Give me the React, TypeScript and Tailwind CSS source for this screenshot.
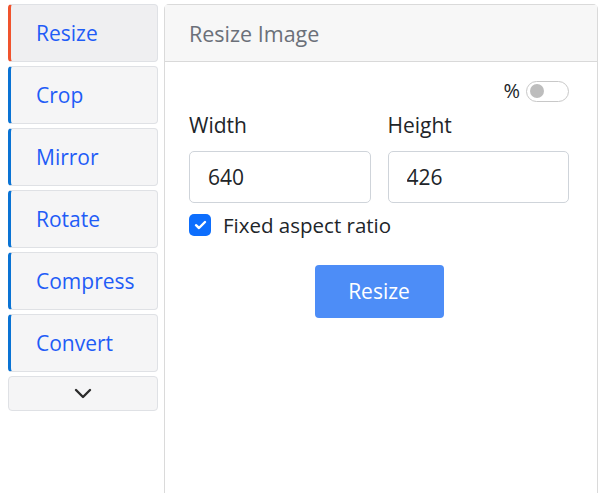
import { useState } from "react";

const TOOLS = ["Resize", "Crop", "Mirror", "Rotate", "Compress", "Convert"];

export default function App() {
  const [fixed, setFixed] = useState(true);
  const [pct, setPct] = useState(false);

  return (
    <div className="flex h-[493px] w-[600px] overflow-hidden bg-white font-['Open_Sans',sans-serif] text-[#212529]">
      {/* Sidebar */}
      <div className="flex w-[164px] shrink-0 flex-col gap-[4px] pl-[8px] pr-[6px] pt-[4px]">
        {TOOLS.map((t, i) => (
          <button
            key={t}
            className={`flex h-[58px] items-center rounded-[4px] border border-[#dfe1e5] border-l-[3px] pl-[25px] pt-[2px] text-left text-[21px] text-[#1f5cf7] ${
              i === 0 ? "border-l-[#f0532d] bg-[#efeff1]" : "border-l-[#0a73d4] bg-[#f5f5f6]"
            }`}
          >
            {t}
          </button>
        ))}
        <button className="flex h-[35px] items-center justify-center rounded-[4px] border border-[#dfe1e5] bg-[#f5f5f6]">
          <svg width="20" height="12" viewBox="0 0 20 12" fill="none" stroke="#2b2b2b" strokeWidth="2.4" strokeLinecap="round" strokeLinejoin="round">
            <path d="M3 2l7 7 7-7" />
          </svg>
        </button>
      </div>

      {/* Main panel */}
      <div className="mt-[4px] mr-[2px] flex flex-1 flex-col rounded-t-[5px] border border-b-0 border-[#dadada]">
        <div className="flex h-[57px] items-center border-b border-[#d9d9d9] bg-[#f7f7f7] pl-[24px] pt-[2px] text-[21.5px] text-[#6b7079]">
          Resize Image
        </div>
        <div className="flex flex-col pl-[24px] pr-[28px]">
          <div className="mt-[14px] flex items-center justify-end gap-[6px]">
            <span className="text-[20px]">%</span>
            <button
              onClick={() => setPct(!pct)}
              className="flex h-[21px] w-[43px] items-center rounded-full border border-[#c8c8c8] bg-white px-[3px]"
            >
              <span className="h-[14px] w-[14px] rounded-full bg-[#bdbdbd]" />
            </button>
          </div>
          <div className="mt-[4px] grid grid-cols-2 gap-[17px]">
            <label className="flex flex-col">
              <span className="text-[21px] leading-[30px]">Width</span>
              <input
                defaultValue="640"
                className="mt-[11px] h-[52px] w-full rounded-[5px] border border-[#cfd4da] px-[18px] text-[21px] outline-none"
              />
            </label>
            <label className="flex flex-col">
              <span className="text-[21px] leading-[30px]">Height</span>
              <input
                defaultValue="426"
                className="mt-[11px] h-[52px] w-full rounded-[5px] border border-[#cfd4da] px-[18px] text-[21px] outline-none"
              />
            </label>
          </div>
          <label className="mt-[7px] flex items-center gap-[12px]">
            <span
              onClick={() => setFixed(!fixed)}
              className={`flex h-[22px] w-[22px] items-center justify-center rounded-[5px] ${fixed ? "bg-[#0d6efd]" : "border border-[#cfd4da] bg-white"}`}
            >
              {fixed && (
                <svg width="13" height="10" viewBox="0 0 13 10" fill="none" stroke="white" strokeWidth="2.4" strokeLinecap="round" strokeLinejoin="round">
                  <path d="M2 5.2l3 2.8 6-6" />
                </svg>
              )}
            </span>
            <span className="text-[20.5px]">Fixed aspect ratio</span>
          </label>
          <div className="mt-[24px] flex justify-center">
            <button className="h-[53px] w-[129px] rounded-[4px] bg-[#4d8df7] text-[21px] text-white">
              Resize
            </button>
          </div>
        </div>
      </div>
    </div>
  );
}
